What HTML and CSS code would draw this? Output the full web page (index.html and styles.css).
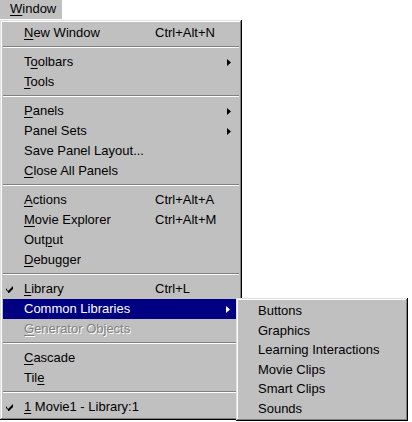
FILE: index.html
```html
<!DOCTYPE html>
<html lang="en">
<head>
    <meta charset="UTF-8">
    <title>Window menu</title>
    <link rel="stylesheet" href="styles.css">
</head>
<body>
    <div class="menubar">
        <span class="menu-title"><u>W</u>indow</span>
    </div>

    <div class="menu">
        <div class="item"><span class="check"></span><span class="label"><u>N</u>ew Window</span><span class="key">Ctrl+Alt+N</span><span class="arrow"></span></div>
        <div class="sep"></div>
        <div class="item"><span class="check"></span><span class="label">T<u>o</u>olbars</span><span class="key"></span><span class="arrow"><svg width="4" height="7" viewBox="0 0 4 7"><path d="M0 0 L4 3.5 L0 7 Z"/></svg></span></div>
        <div class="item"><span class="check"></span><span class="label"><u>T</u>ools</span><span class="key"></span><span class="arrow"></span></div>
        <div class="sep"></div>
        <div class="item"><span class="check"></span><span class="label"><u>P</u>anels</span><span class="key"></span><span class="arrow"><svg width="4" height="7" viewBox="0 0 4 7"><path d="M0 0 L4 3.5 L0 7 Z"/></svg></span></div>
        <div class="item"><span class="check"></span><span class="label">Panel Sets</span><span class="key"></span><span class="arrow"><svg width="4" height="7" viewBox="0 0 4 7"><path d="M0 0 L4 3.5 L0 7 Z"/></svg></span></div>
        <div class="item"><span class="check"></span><span class="label">Save Panel Layout...</span><span class="key"></span><span class="arrow"></span></div>
        <div class="item"><span class="check"></span><span class="label"><u>C</u>lose All Panels</span><span class="key"></span><span class="arrow"></span></div>
        <div class="sep"></div>
        <div class="item"><span class="check"></span><span class="label"><u>A</u>ctions</span><span class="key">Ctrl+Alt+A</span><span class="arrow"></span></div>
        <div class="item"><span class="check"></span><span class="label"><u>M</u>ovie Explorer</span><span class="key">Ctrl+Alt+M</span><span class="arrow"></span></div>
        <div class="item"><span class="check"></span><span class="label">Out<u>p</u>ut</span><span class="key"></span><span class="arrow"></span></div>
        <div class="item"><span class="check"></span><span class="label"><u>D</u>ebugger</span><span class="key"></span><span class="arrow"></span></div>
        <div class="sep"></div>
        <div class="item"><span class="check"><svg width="7" height="7" viewBox="0 0 7 7"><path d="M0 2 L0 4 L2 6 L2 7 L3 7 L7 3 L7 0 L2 5 Z"/></svg></span><span class="label"><u>L</u>ibrary</span><span class="key">Ctrl+L</span><span class="arrow"></span></div>
        <div class="item active"><span class="check"></span><span class="label">Common Libraries</span><span class="key"></span><span class="arrow"><svg width="4" height="7" viewBox="0 0 4 7"><path d="M0 0 L4 3.5 L0 7 Z"/></svg></span></div>
        <div class="item disabled"><span class="check"></span><span class="label"><u>G</u>enerator Objects</span><span class="key"></span><span class="arrow"></span></div>
        <div class="sep"></div>
        <div class="item"><span class="check"></span><span class="label"><u>C</u>ascade</span><span class="key"></span><span class="arrow"></span></div>
        <div class="item"><span class="check"></span><span class="label">Til<u>e</u></span><span class="key"></span><span class="arrow"></span></div>
        <div class="sep"></div>
        <div class="item"><span class="check"><svg width="7" height="7" viewBox="0 0 7 7"><path d="M0 2 L0 4 L2 6 L2 7 L3 7 L7 3 L7 0 L2 5 Z"/></svg></span><span class="label"><u>1</u> Movie1 - Library:1</span><span class="key"></span><span class="arrow"></span></div>

        <div class="submenu">
            <div class="sub-item">Buttons</div>
            <div class="sub-item">Graphics</div>
            <div class="sub-item">Learning Interactions</div>
            <div class="sub-item">Movie Clips</div>
            <div class="sub-item">Smart Clips</div>
            <div class="sub-item">Sounds</div>
        </div>
    </div>
</body>
</html>
```

FILE: styles.css
```css
* {
    box-sizing: border-box;
    margin: 0;
    padding: 0;
}
body {
    font-family: "Liberation Sans", Arial, sans-serif;
    font-size: 13px;
    color: #000;
    background-color: #fff;
    width: 412px;
    height: 422px;
    overflow: hidden;
}
u {
    text-decoration: underline;
    text-underline-offset: 2px;
}
.menubar {
    height: 20px;
}
.menu-title {
    display: inline-block;
    width: 62px;
    height: 19px;
    padding-left: 10px;
    line-height: 18px;
    background-color: #c0c0c0;
}
.menu {
    position: relative;
    width: 242px;
    padding: 3px;
    background-color: #c0c0c0;
    box-shadow: inset -1px -1px #000, inset 1px 1px #dfdfdf,
                inset -2px -2px #808080, inset 2px 2px #fff;
}
.item {
    display: grid;
    grid-template-columns: 21px 131px 1fr 12px;
    align-items: center;
    height: 20px;
    line-height: 20px;
    white-space: nowrap;
}
.check {
    display: flex;
    align-items: center;
    padding-left: 3px;
}
.check svg,
.arrow svg {
    display: block;
    fill: #000;
}
.arrow {
    display: flex;
    align-items: center;
}
.item.active {
    background-color: #000080;
    color: #fff;
    margin-right: 1px;
}
.item.active .arrow svg {
    fill: #fff;
}
.item.disabled {
    color: #808080;
    text-shadow: 1px 1px #fff;
}
.sep {
    margin: 3px 0 4px;
    border-top: 1px solid #808080;
    border-bottom: 1px solid #fff;
}
.submenu {
    position: absolute;
    left: 236px;
    top: 278px;
    width: 172px;
    padding: 3px;
    background-color: #c0c0c0;
    box-shadow: inset -1px -1px #000, inset 1px 1px #dfdfdf,
                inset -2px -2px #808080, inset 2px 2px #fff;
}
.sub-item {
    height: 19.5px;
    line-height: 19.5px;
    padding-left: 19px;
    white-space: nowrap;
}
```
